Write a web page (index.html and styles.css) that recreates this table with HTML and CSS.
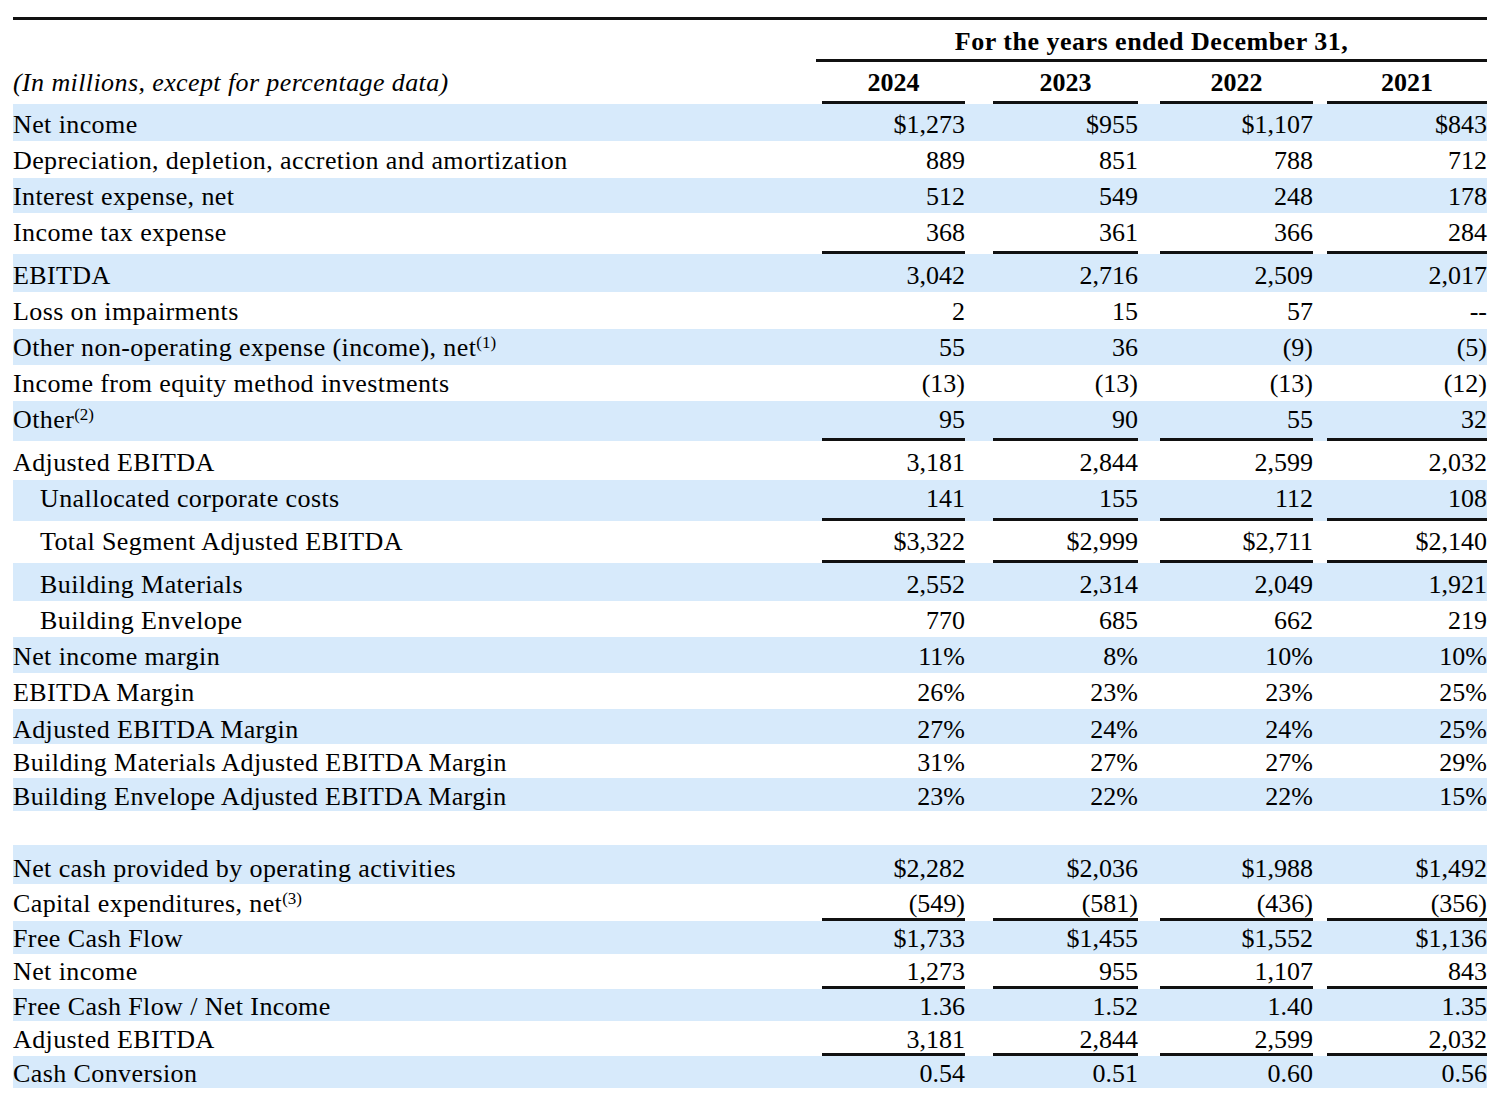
FILE: index.html
```html
<!DOCTYPE html>
<html lang="en">
<head>
<meta charset="utf-8">
<title>Reconciliation of Non-GAAP Measures</title>
<link rel="stylesheet" href="styles.css">
</head>
<body>
<table class="fin">
  <colgroup>
    <col class="c-label"><col class="c-s0"><col class="c-v1"><col class="c-s1"><col class="c-v2"><col class="c-s2"><col class="c-v3"><col class="c-s3"><col class="c-v4">
  </colgroup>
  <thead>
    <tr class="h42 ul p4">
      <th class="lab"></th>
      <th colspan="8" class="span-head v">For the years ended December 31,</th>
    </tr>
    <tr class="h42 ul p5">
      <th class="lab note">(In millions, except for percentage data)</th>
      <th></th>
      <th class="yr v">2024</th><th></th>
      <th class="yr v">2023</th><th></th>
      <th class="yr v">2022</th><th></th>
      <th class="yr v">2021</th>
    </tr>
  </thead>
  <tbody>
    <tr class="h37 band"><td class="lab">Net income</td><td></td><td class="v">$1,273</td><td></td><td class="v">$955</td><td></td><td class="v">$1,107</td><td></td><td class="v">$843</td></tr>
    <tr class="h37 p4"><td class="lab">Depreciation, depletion, accretion and amortization</td><td></td><td class="v">889</td><td></td><td class="v">851</td><td></td><td class="v">788</td><td></td><td class="v">712</td></tr>
    <tr class="h35 band"><td class="lab">Interest expense, net</td><td></td><td class="v">512</td><td></td><td class="v">549</td><td></td><td class="v">248</td><td></td><td class="v">178</td></tr>
    <tr class="h41 ul p5"><td class="lab">Income tax expense</td><td></td><td class="v">368</td><td></td><td class="v">361</td><td></td><td class="v">366</td><td></td><td class="v">284</td></tr>
    <tr class="h38 band"><td class="lab">EBITDA</td><td></td><td class="v">3,042</td><td></td><td class="v">2,716</td><td></td><td class="v">2,509</td><td></td><td class="v">2,017</td></tr>
    <tr class="h37 p4"><td class="lab">Loss on impairments</td><td></td><td class="v">2</td><td></td><td class="v">15</td><td></td><td class="v">57</td><td></td><td class="v">--</td></tr>
    <tr class="h36 band p4"><td class="lab">Other non-operating expense (income), net<sup>(1)</sup></td><td></td><td class="v">55</td><td></td><td class="v">36</td><td></td><td class="v">(9)</td><td></td><td class="v">(5)</td></tr>
    <tr class="h36 p4"><td class="lab">Income from equity method investments</td><td></td><td class="v">(13)</td><td></td><td class="v">(13)</td><td></td><td class="v">(13)</td><td></td><td class="v">(12)</td></tr>
    <tr class="h40 band ul p5"><td class="lab">Other<sup>(2)</sup></td><td></td><td class="v">95</td><td></td><td class="v">90</td><td></td><td class="v">55</td><td></td><td class="v">32</td></tr>
    <tr class="h39 p4"><td class="lab">Adjusted EBITDA</td><td></td><td class="v">3,181</td><td></td><td class="v">2,844</td><td></td><td class="v">2,599</td><td></td><td class="v">2,032</td></tr>
    <tr class="h41 band ul p6"><td class="lab ind">Unallocated corporate costs</td><td></td><td class="v">141</td><td></td><td class="v">155</td><td></td><td class="v">112</td><td></td><td class="v">108</td></tr>
    <tr class="h42 ul p5"><td class="lab ind">Total Segment Adjusted EBITDA</td><td></td><td class="v">$3,322</td><td></td><td class="v">$2,999</td><td></td><td class="v">$2,711</td><td></td><td class="v">$2,140</td></tr>
    <tr class="h38 band"><td class="lab ind">Building Materials</td><td></td><td class="v">2,552</td><td></td><td class="v">2,314</td><td></td><td class="v">2,049</td><td></td><td class="v">1,921</td></tr>
    <tr class="h36"><td class="lab ind">Building Envelope</td><td></td><td class="v">770</td><td></td><td class="v">685</td><td></td><td class="v">662</td><td></td><td class="v">219</td></tr>
    <tr class="h36 band"><td class="lab">Net income margin</td><td></td><td class="v">11%</td><td></td><td class="v">8%</td><td></td><td class="v">10%</td><td></td><td class="v">10%</td></tr>
    <tr class="h36"><td class="lab">EBITDA Margin</td><td></td><td class="v">26%</td><td></td><td class="v">23%</td><td></td><td class="v">23%</td><td></td><td class="v">25%</td></tr>
    <tr class="h35 band p1"><td class="lab">Adjusted EBITDA Margin</td><td></td><td class="v">27%</td><td></td><td class="v">24%</td><td></td><td class="v">24%</td><td></td><td class="v">25%</td></tr>
    <tr class="h34 p2"><td class="lab">Building Materials Adjusted EBITDA Margin</td><td></td><td class="v">31%</td><td></td><td class="v">27%</td><td></td><td class="v">27%</td><td></td><td class="v">29%</td></tr>
    <tr class="h33 band p1"><td class="lab">Building Envelope Adjusted EBITDA Margin</td><td></td><td class="v">23%</td><td></td><td class="v">22%</td><td></td><td class="v">22%</td><td></td><td class="v">15%</td></tr>
    <tr class="h34 blank"><td class="lab"></td><td></td><td></td><td></td><td></td><td></td><td></td><td></td><td></td></tr>
    <tr class="h39 band p2"><td class="lab">Net cash provided by operating activities</td><td></td><td class="v">$2,282</td><td></td><td class="v">$2,036</td><td></td><td class="v">$1,988</td><td></td><td class="v">$1,492</td></tr>
    <tr class="h37 ul p1"><td class="lab">Capital expenditures, net<sup>(3)</sup></td><td></td><td class="v">(549)</td><td></td><td class="v">(581)</td><td></td><td class="v">(436)</td><td></td><td class="v">(356)</td></tr>
    <tr class="h33 band p2"><td class="lab">Free Cash Flow</td><td></td><td class="v">$1,733</td><td></td><td class="v">$1,455</td><td></td><td class="v">$1,552</td><td></td><td class="v">$1,136</td></tr>
    <tr class="h35 ul p1"><td class="lab">Net income</td><td></td><td class="v">1,273</td><td></td><td class="v">955</td><td></td><td class="v">1,107</td><td></td><td class="v">843</td></tr>
    <tr class="h32 band p1"><td class="lab">Free Cash Flow / Net Income</td><td></td><td class="v">1.36</td><td></td><td class="v">1.52</td><td></td><td class="v">1.40</td><td></td><td class="v">1.35</td></tr>
    <tr class="h35 ul p0"><td class="lab">Adjusted EBITDA</td><td></td><td class="v">3,181</td><td></td><td class="v">2,844</td><td></td><td class="v">2,599</td><td></td><td class="v">2,032</td></tr>
    <tr class="h32 band p1"><td class="lab">Cash Conversion</td><td></td><td class="v">0.54</td><td></td><td class="v">0.51</td><td></td><td class="v">0.60</td><td></td><td class="v">0.56</td></tr>
  </tbody>
</table>
</body>
</html>
```

FILE: styles.css
```css
html, body {
  margin: 0;
  background: #ffffff;
}

body {
  padding: 17px 0 0 13px;
  font-family: "Liberation Serif", "Times New Roman", serif;
  font-size: 26px;
  color: #000000;
}

.fin {
  border-collapse: separate;
  border-spacing: 0;
  table-layout: fixed;
  width: 1474px;
  border-top: 3px solid #111111;
}

.c-label { width: 803px; }
.c-s0 { width: 6px; }
.c-v1 { width: 143px; }
.c-s1 { width: 28px; }
.c-v2 { width: 145px; }
.c-s2 { width: 22px; }
.c-v3 { width: 153px; }
.c-s3 { width: 14px; }
.c-v4 { width: 160px; }

.fin td,
.fin th {
  padding: 0 0 3px 0;
  line-height: 26px;
  vertical-align: bottom;
  white-space: nowrap;
  font-weight: normal;
  overflow: visible;
}

.lab {
  text-align: left;
  letter-spacing: 0.4px;
}

.ind {
  padding-left: 27px !important;
}

.v {
  text-align: right;
  letter-spacing: 0;
}

.note {
  font-style: italic;
}

.span-head {
  text-align: center !important;
  font-weight: bold !important;
  letter-spacing: 0.5px !important;
}

.yr {
  text-align: center !important;
  font-weight: bold !important;
}

sup {
  font-size: 17px;
  line-height: 1;
  vertical-align: 8px;
  letter-spacing: 0;
}

/* row heights */
.h32 { height: 32px; }
.h33 { height: 33px; }
.h34 { height: 34px; }
.h35 { height: 35px; }
.h36 { height: 36px; }
.h37 { height: 37px; }
.h38 { height: 38px; }
.h39 { height: 39px; }
.h40 { height: 40px; }
.h41 { height: 41px; }
.h42 { height: 42px; }

/* baseline tuning */
.p0 td, .p0 th { padding-bottom: 0; }
.p1 td, .p1 th { padding-bottom: 1px; }
.p2 td, .p2 th { padding-bottom: 2px; }
.p4 td, .p4 th { padding-bottom: 4px; }
.p5 td, .p5 th { padding-bottom: 5px; }
.p6 td, .p6 th { padding-bottom: 6px; }

/* shaded rows */
.band td {
  background: #d7eafb;
}

/* rows closed by a rule under the figures */
.ul td,
.ul th {
  border-bottom: 3px solid transparent;
}

.ul td.v,
.ul th.v {
  border-bottom-color: #111111;
}
```
